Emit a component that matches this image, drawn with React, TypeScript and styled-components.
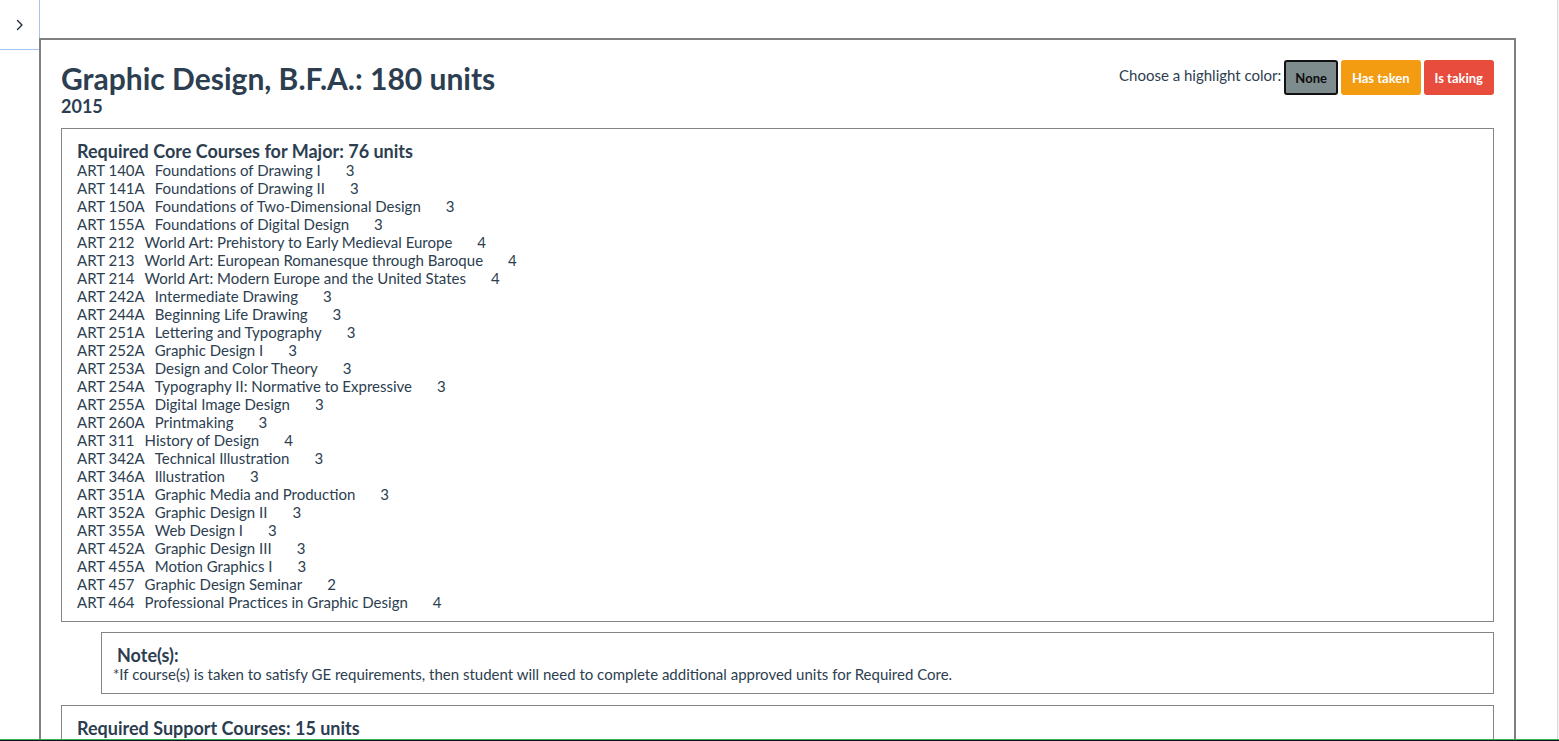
import React from "react";
import styled, { createGlobalStyle } from "styled-components";

const GlobalStyle = createGlobalStyle`
  html, body {
    margin: 0;
    padding: 0;
    height: 100%;
    overflow: hidden;
    background: #ffffff;
  }
  body {
    font-family: Lato, "Open Sans", "Liberation Sans", sans-serif;
    color: #2c3e50;
  }
  * { box-sizing: border-box; }
`;

const Page = styled.div`
  display: flex;
  height: 100vh;
  overflow: hidden;
`;

const Sidebar = styled.aside`
  width: 39px;
  flex-shrink: 0;
`;

const ToggleButton = styled.div`
  width: 40px;
  height: 50px;
  border-right: 1px solid #a3c3f7;
  border-bottom: 1px solid #a3c3f7;
  display: flex;
  align-items: center;
  justify-content: center;
  color: #1f2d3a;
`;

const Main = styled.main`
  flex: 1;
  min-width: 0;
  padding: 38px 41px 0 0;
`;

const ScrollEdge = styled.div`
  width: 2px;
  flex-shrink: 0;
  border-left: 1px solid #d9d9d9;
  background: #f3f3f3;
`;

const Card = styled.section`
  border: 2px solid #808080;
  background: #ffffff;
  padding: 20px 20px 40px;
`;

const Header = styled.header`
  display: flex;
  justify-content: space-between;
  align-items: flex-start;
`;

const TitleBlock = styled.div`
  display: flex;
  flex-direction: column;
`;

const Title = styled.h1`
  margin: 0;
  font-size: 30px;
  line-height: 36px;
  font-weight: 700;
  color: #2c3e50;
`;

const Year = styled.div`
  font-size: 18px;
  line-height: 21px;
  font-weight: 700;
  color: #2c3e50;
`;

const Chooser = styled.div`
  display: flex;
  align-items: center;
  font-size: 15px;
  color: #2c3e50;
`;

const ChooserLabel = styled.span`
  margin-right: 3px;
  margin-top: -6px;
`;

const HighlightButton = styled.button<{ $bg: string; $fg: string; $border: string }>`
  height: 35px;
  padding: 0 9px;
  margin-left: 3px;
  border-radius: 3px;
  border: 2px solid ${(p) => p.$border};
  background: ${(p) => p.$bg};
  color: ${(p) => p.$fg};
  font-family: Lato, "Liberation Sans", sans-serif;
  font-size: 13px;
  font-weight: 700;
  cursor: pointer;
  &:first-of-type { margin-left: 0; }
`;

const SectionBox = styled.div<{ $indent?: boolean }>`
  border: 1px solid #858585;
  padding: 12px ${(p) => (p.$indent ? "11px" : "15px")} 10px;
  margin-top: ${(p) => (p.$indent ? "10px" : "11px")};
  margin-left: ${(p) => (p.$indent ? "40px" : "0")};
`;

const SectionTitle = styled.h3<{ $shift?: boolean }>`
  margin: 0 0 0 ${(p) => (p.$shift ? "4px" : "0")};
  font-size: 18px;
  line-height: 20px;
  font-weight: 700;
  color: #2c3e50;
`;

const NoteText = styled.p`
  margin: 0;
  font-size: 15px;
  line-height: 18px;
  color: #2c3e50;
`;

const CourseList = styled.ul`
  list-style: none;
  margin: 0;
  padding: 0;
`;

const CourseRow = styled.li`
  font-size: 15px;
  line-height: 18px;
  color: #2c3e50;
  white-space: nowrap;
`;

const Code = styled.span`
  margin-right: 10px;
`;

const CourseName = styled.span`
  margin-right: 25px;
`;

const BottomBar = styled.div`
  position: fixed;
  left: 0;
  right: 0;
  bottom: 0;
  height: 2px;
  border-top: 1px solid #2fb457;
  background: #111111;
`;

type Course = [string, string, number];

const coreCourses: Course[] = [
  ["ART 140A", "Foundations of Drawing I", 3],
  ["ART 141A", "Foundations of Drawing II", 3],
  ["ART 150A", "Foundations of Two-Dimensional Design", 3],
  ["ART 155A", "Foundations of Digital Design", 3],
  ["ART 212", "World Art: Prehistory to Early Medieval Europe", 4],
  ["ART 213", "World Art: European Romanesque through Baroque", 4],
  ["ART 214", "World Art: Modern Europe and the United States", 4],
  ["ART 242A", "Intermediate Drawing", 3],
  ["ART 244A", "Beginning Life Drawing", 3],
  ["ART 251A", "Lettering and Typography", 3],
  ["ART 252A", "Graphic Design I", 3],
  ["ART 253A", "Design and Color Theory", 3],
  ["ART 254A", "Typography II: Normative to Expressive", 3],
  ["ART 255A", "Digital Image Design", 3],
  ["ART 260A", "Printmaking", 3],
  ["ART 311", "History of Design", 4],
  ["ART 342A", "Technical Illustration", 3],
  ["ART 346A", "Illustration", 3],
  ["ART 351A", "Graphic Media and Production", 3],
  ["ART 352A", "Graphic Design II", 3],
  ["ART 355A", "Web Design I", 3],
  ["ART 452A", "Graphic Design III", 3],
  ["ART 455A", "Motion Graphics I", 3],
  ["ART 457", "Graphic Design Seminar", 2],
  ["ART 464", "Professional Practices in Graphic Design", 4],
];

const supportCourses: Course[] = [
  ["ART 101", "Introduction to Art", 3],
  ["ART 180", "Photography I", 3],
];

const Chevron = () => (
  <svg width="8" height="12" viewBox="0 0 8 12" fill="none">
    <polyline points="1.5,1.5 6,6 1.5,10.5" stroke="currentColor" strokeWidth="1.4" strokeLinecap="round" strokeLinejoin="round" />
  </svg>
);

const Courses = ({ items }: { items: Course[] }) => (
  <CourseList>
    {items.map(([code, name, units]) => (
      <CourseRow key={code}>
        <Code>{code}</Code>
        <CourseName>{name}</CourseName>
        <span>{units}</span>
      </CourseRow>
    ))}
  </CourseList>
);

export default function App() {
  return (
    <>
      <GlobalStyle />
      <Page>
        <Sidebar>
          <ToggleButton>
            <Chevron />
          </ToggleButton>
        </Sidebar>
        <Main>
          <Card>
            <Header>
              <TitleBlock>
                <Title>Graphic Design, B.F.A.: 180 units</Title>
                <Year>2015</Year>
              </TitleBlock>
              <Chooser>
                <ChooserLabel>Choose a highlight color:</ChooserLabel>
                <HighlightButton $bg="#7f8c8d" $fg="#0d0d0d" $border="#111111">None</HighlightButton>
                <HighlightButton $bg="#f39c12" $fg="#ffffff" $border="#f39c12">Has taken</HighlightButton>
                <HighlightButton $bg="#e74c3c" $fg="#ffffff" $border="#e74c3c">Is taking</HighlightButton>
              </Chooser>
            </Header>

            <SectionBox>
              <SectionTitle>Required Core Courses for Major: 76 units</SectionTitle>
              <Courses items={coreCourses} />
            </SectionBox>

            <SectionBox $indent>
              <SectionTitle $shift>Note(s):</SectionTitle>
              <NoteText>
                *If course(s) is taken to satisfy GE requirements, then student will need to complete additional approved units for Required Core.
              </NoteText>
            </SectionBox>

            <SectionBox>
              <SectionTitle>Required Support Courses: 15 units</SectionTitle>
              <Courses items={supportCourses} />
            </SectionBox>
          </Card>
        </Main>
        <ScrollEdge />
      </Page>
      <BottomBar />
    </>
  );
}
